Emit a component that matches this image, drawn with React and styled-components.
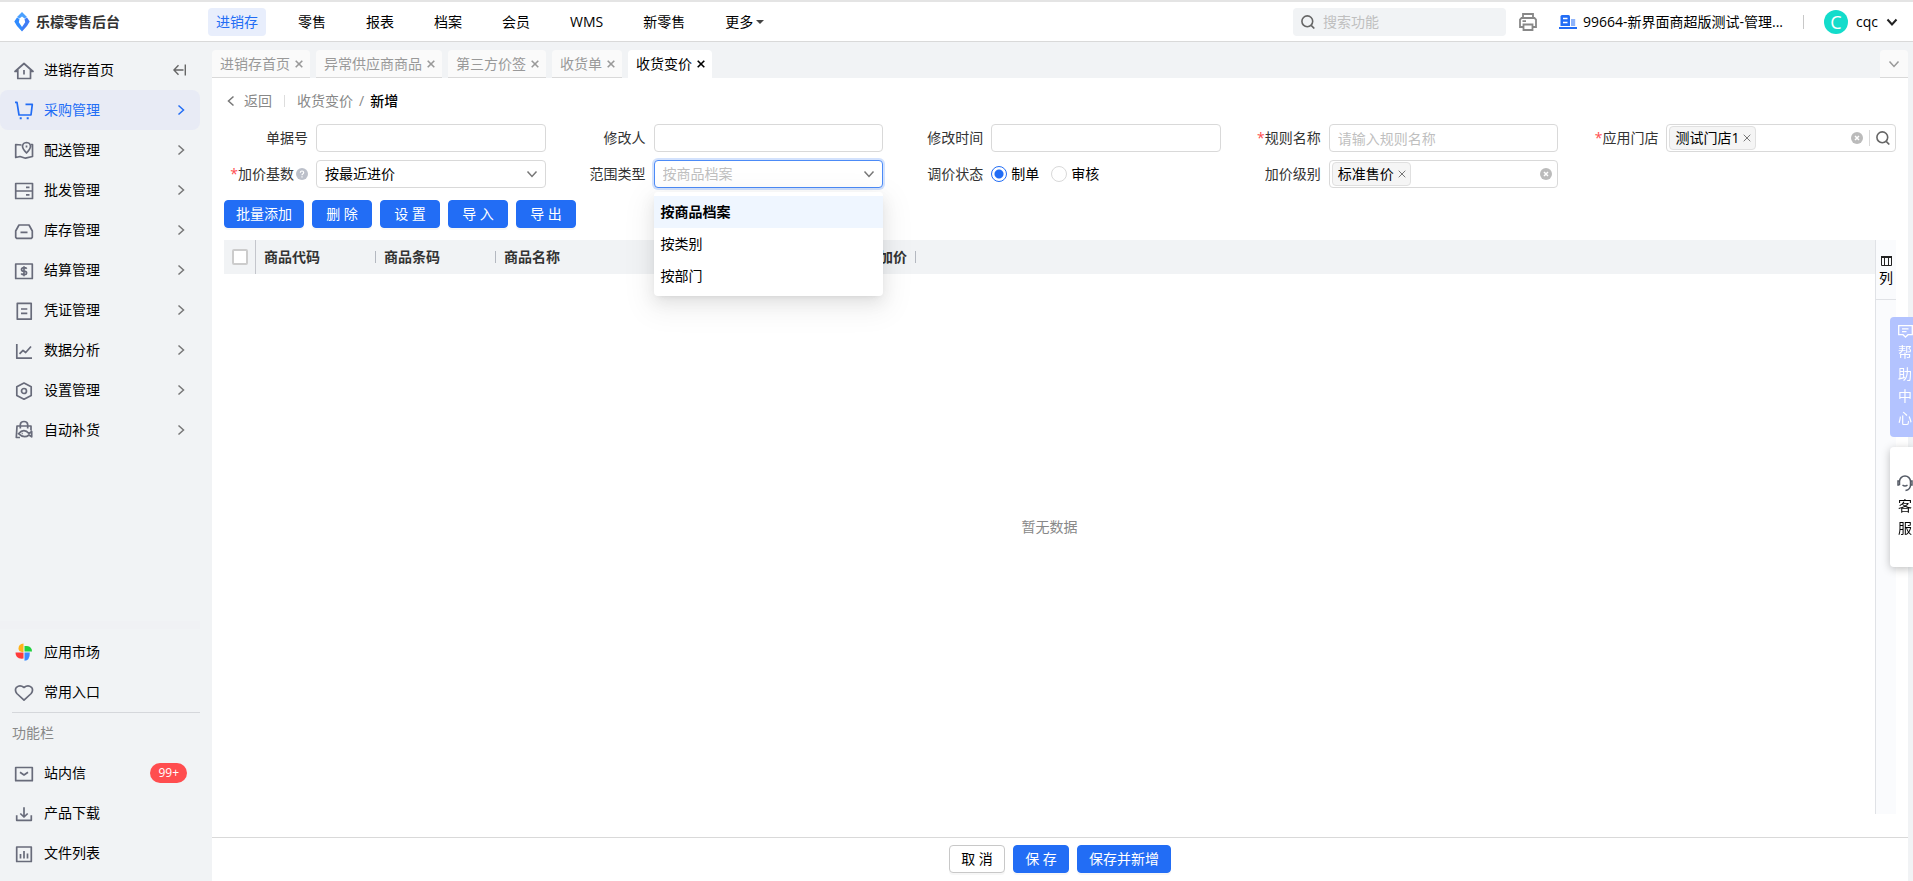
import styled, { createGlobalStyle, css } from "styled-components"
import { useState } from "react"

const menuSuperior = ["进销存", "零售", "报表", "档案", "会员", "WMS", "新零售"]

const abas = ["进销存首页", "异常供应商商品", "第三方价签", "收货单", "收货变价"]

const menuLateral = [
    { nome: "采购管理", icone: "cart" },
    { nome: "配送管理", icone: "map" },
    { nome: "批发管理", icone: "server" },
    { nome: "库存管理", icone: "stock" },
    { nome: "结算管理", icone: "money" },
    { nome: "凭证管理", icone: "voucher" },
    { nome: "数据分析", icone: "chart" },
    { nome: "设置管理", icone: "settings" },
    { nome: "自动补货", icone: "bag" },
]

const opcoes = ["按商品档案", "按类别", "按部门"]

export default function App() {

    const [categoria, setCategoria] = useState("采购管理")
    const [tipo, setTipo] = useState("按商品档案")
    const [estado, setEstado] = useState("制单")

    return (
        <FullPage>
            <GlobalStyle />
            <Header>
                <Logo>
                    <LogoIcon />
                    <h1>乐檬零售后台</h1>
                </Logo>
                <MenuTopo>
                    {menuSuperior.map((m, i) => <LinkTopo href="#" key={m} $ativo={i === 0}>{m}</LinkTopo>)}
                    <LinkTopo href="#">更多<Caret /></LinkTopo>
                </MenuTopo>
                <Busca>
                    <SearchIcon />
                    <input aria-label="搜索功能" placeholder="搜索功能" />
                </Busca>
                <BotaoIcone aria-label="打印"><PrinterIcon /></BotaoIcone>
                <Loja href="#"><BuildingIcon />99664-新界面商超版测试-管理...</Loja>
                <Risco />
                <Usuario>
                    <Avatar>C</Avatar>
                    cqc
                    <Seta cor="#222222" grossura={2} />
                </Usuario>
            </Header>

            <Corpo>
                <Lateral>
                    <ItemLateral>
                        <MenuIcon nome="home" />
                        <span>进销存首页</span>
                        <CollapseIcon />
                    </ItemLateral>
                    {menuLateral.map(({ nome, icone }) => (
                        <ItemLateral key={nome} $ativo={nome === categoria} onClick={() => setCategoria(nome)}>
                            <MenuIcon nome={icone} />
                            <span>{nome}</span>
                            <Seta lado="direita" cor={nome === categoria ? "#226df5" : "#777777"} />
                        </ItemLateral>
                    ))}
                    <Espaco />
                    <Sombra />
                    <ItemLateral>
                        <MarketIcon />
                        <span>应用市场</span>
                    </ItemLateral>
                    <ItemLateral>
                        <MenuIcon nome="heart" />
                        <span>常用入口</span>
                    </ItemLateral>
                    <Divisao />
                    <Titulo>功能栏</Titulo>
                    <ItemLateral>
                        <MenuIcon nome="mail" />
                        <span>站内信</span>
                        <Aviso>99+</Aviso>
                    </ItemLateral>
                    <ItemLateral>
                        <MenuIcon nome="download" />
                        <span>产品下载</span>
                    </ItemLateral>
                    <ItemLateral>
                        <MenuIcon nome="files" />
                        <span>文件列表</span>
                    </ItemLateral>
                </Lateral>

                <Principal>
                    <Abas>
                        {abas.map((a) => (
                            <Aba key={a} $ativa={a === "收货变价"}>
                                {a}
                                <CloseIcon />
                            </Aba>
                        ))}
                        <MaisAbas aria-label="更多标签"><Seta cor="#999999" /></MaisAbas>
                    </Abas>
                    <Conteudo>
                        <Caminho>
                            <a href="#"><Seta lado="esquerda" cor="#777777" />返回</a>
                            <i />
                            <a href="#">收货变价</a>
                            <span>/</span>
                            <strong>新增</strong>
                        </Caminho>

                        <Formulario>
                            <Campo>
                                <label htmlFor="numero">单据号</label>
                                <Entrada id="numero" />
                            </Campo>
                            <Campo>
                                <label htmlFor="autor">修改人</label>
                                <Entrada id="autor" />
                            </Campo>
                            <Campo>
                                <label htmlFor="hora">修改时间</label>
                                <Entrada id="hora" />
                            </Campo>
                            <Campo>
                                <label htmlFor="regra"><b>*</b>规则名称</label>
                                <Entrada id="regra" placeholder="请输入规则名称" />
                            </Campo>
                            <Campo>
                                <label htmlFor="lojas"><b>*</b>应用门店</label>
                                <Caixa>
                                    <Etiqueta>测试门店1<button aria-label="移除"><CloseIcon fina /></button></Etiqueta>
                                    <input id="lojas" />
                                    <ClearIcon />
                                    <i />
                                    <button aria-label="搜索"><SearchIcon /></button>
                                </Caixa>
                            </Campo>
                            <Campo>
                                <label htmlFor="base"><b>*</b>加价基数<HelpIcon /></label>
                                <Selecao>
                                    <select id="base"><option>按最近进价</option></select>
                                    <Seta cor="#777777" />
                                </Selecao>
                            </Campo>
                            <Campo>
                                <label htmlFor="tipo">范围类型</label>
                                <Selecao $aberto>
                                    <select id="tipo" value={tipo} onChange={(e) => setTipo(e.target.value)}>
                                        {opcoes.map((o) => <option key={o}>{o}</option>)}
                                    </select>
                                    <Seta cor="#777777" />
                                    <Lista role="listbox" aria-label="范围类型">
                                        {opcoes.map((o) => (
                                            <Opcao key={o} role="option" aria-selected={o === tipo} $ativa={o === tipo} onClick={() => setTipo(o)}>{o}</Opcao>
                                        ))}
                                    </Lista>
                                </Selecao>
                            </Campo>
                            <Campo as="fieldset">
                                <legend>调价状态</legend>
                                <Radios>
                                    {["制单", "审核"].map((r) => (
                                        <label key={r}>
                                            <input type="radio" name="estado" checked={estado === r} onChange={() => setEstado(r)} />
                                            {r}
                                        </label>
                                    ))}
                                </Radios>
                            </Campo>
                            <Campo>
                                <label htmlFor="nivel">加价级别</label>
                                <Caixa>
                                    <Etiqueta>标准售价<button aria-label="移除"><CloseIcon fina /></button></Etiqueta>
                                    <input id="nivel" />
                                    <ClearIcon />
                                </Caixa>
                            </Campo>
                        </Formulario>

                        <Acoes>
                            <Botao $largo>批量添加</Botao>
                            <Botao $largo>删 除</Botao>
                            <Botao $largo>设 置</Botao>
                            <Botao $largo>导 入</Botao>
                            <Botao $largo>导 出</Botao>
                        </Acoes>

                        <Quadro>
                            <Dados>
                                <Tabela>
                                    <thead>
                                        <tr>
                                            <Selecionar><input type="checkbox" aria-label="全选" /></Selecionar>
                                            <Coluna $largura="120px"><div>商品代码</div></Coluna>
                                            <Coluna $largura="120px"><div>商品条码</div></Coluna>
                                            <Coluna $largura="240px"><div>商品名称</div></Coluna>
                                            <Coluna $largura="180px" $fim><div>加价</div></Coluna>
                                            <th />
                                        </tr>
                                    </thead>
                                </Tabela>
                                <Vazio>暂无数据</Vazio>
                            </Dados>
                            <Ferramentas>
                                <button><ColumnsIcon />列</button>
                            </Ferramentas>
                        </Quadro>

                        <Rodape>
                            <Botao $claro>取 消</Botao>
                            <Botao>保 存</Botao>
                            <Botao>保存并新增</Botao>
                        </Rodape>
                    </Conteudo>
                </Principal>
            </Corpo>

            <Flutuantes>
                <Flutuante $azul>
                    <ChatIcon />
                    帮助中心
                </Flutuante>
                <Flutuante>
                    <HeadsetIcon />
                    客服
                </Flutuante>
            </Flutuantes>
        </FullPage>
    )
}

const caminhosSeta = {
    baixo: "M1.5 3.5 6 8.5l4.500-5",
    direita: "M3.500 1.500 8.500 6l-5 4.500",
    esquerda: "M8.500 1.500 3.500 6l5 4.500",
}

function Seta({ lado = "baixo", cor, grossura = 1.5 }) {
    return (
        <svg width="12" height="12" viewBox="0 0 12 12" fill="none" stroke={cor} strokeWidth={grossura}>
            <path d={caminhosSeta[lado]} />
        </svg>
    )
}

function LogoIcon() {
    return (
        <svg width="16" height="20" viewBox="0 0 16 20">
            <path d="M8 0 13 5 10.5 6.5 8 4.5 5.5 6.5 3 5z" fill="#4aa0ff" />
            <path d="M3 5.5 0.3 9.5 3 14 8 19.5V15L4.8 10.2 5.5 7z" fill="#2f8bff" />
            <path d="M13 5.5 15.7 9.5 13 14 8 19.5V15L11.2 10.2 10.5 7z" fill="#3f7cf5" />
        </svg>
    )
}

function SearchIcon() {
    return (
        <svg width="14" height="14" viewBox="0 0 14 14" fill="none" stroke="#666666" strokeWidth="1.6">
            <circle cx="6.3" cy="6.3" r="5.4" />
            <path d="M10.2 10.4 13.3 13.5" />
        </svg>
    )
}

function PrinterIcon() {
    return (
        <svg width="18" height="18" viewBox="0 0 18 18" fill="none" stroke="#888888" strokeWidth="1.8">
            <path d="M4 5V1h10v4M4.5 14H1V6.5L2.5 5h13L17 6.5V14h-3.5" />
            <path d="M4.5 11.500h9V17h-9zM3.500 8.200h3.500" />
        </svg>
    )
}

function BuildingIcon() {
    return (
        <svg width="18" height="14" viewBox="0 0 18 14">
            <path d="M1.5 1.5Q1.5 0 3 0h6.5Q11 0 11 1.5V11H1.5z" fill="#226df5" />
            <path d="M12 4h4.2v7H12z" fill="#8fb4fa" />
            <path d="M0 12h18v2H0z" fill="#226df5" />
            <path d="M4 3.5h4.5M4 7.5h4.5" stroke="#ffffff" strokeWidth="1.3" />
        </svg>
    )
}

function CloseIcon({ fina }) {
    return (
        <svg width="8" height="8" viewBox="0 0 8 8" fill="none" stroke="currentColor" strokeWidth={fina ? 1 : 1.6}>
            <path d="M0.7 0.7 7.3 7.3M7.3 0.7 0.7 7.3" />
        </svg>
    )
}

function ClearIcon() {
    return (
        <svg width="12" height="12" viewBox="0 0 12 12">
            <circle cx="6" cy="6" r="6" fill="#bbbbbb" />
            <path d="M4 4 8 8M8 4 4 8" stroke="#ffffff" strokeWidth="1.5" />
        </svg>
    )
}

function HelpIcon() {
    return (
        <svg width="12" height="12" viewBox="0 0 12 12">
            <circle cx="6" cy="6" r="6" fill="#bcc0ca" />
            <path d="M4.3 4.7Q4.4 3 6 3T7.7 4.6Q7.7 5.4 6.8 5.9 6 6.400 6 7.2M6 8.200V9.4" stroke="#ffffff" strokeWidth="1.2" fill="none" />
        </svg>
    )
}

function CollapseIcon() {
    return (
        <svg width="14" height="12" viewBox="0 0 14 12" fill="none" stroke="#666666" strokeWidth="1.4">
            <path d="M12.3 0.5v11M10.500 6H1M5.500 1.200 0.900 6 5.500 10.800" />
        </svg>
    )
}

function ColumnsIcon() {
    return (
        <svg width="11" height="10" viewBox="0 0 11 10" fill="none" stroke="#222222">
            <path d="M0.500 1.500h10v8H0.500zM3.500 1v8M7.500 1v8" />
            <path d="M0 1h11" strokeWidth="2" />
        </svg>
    )
}

function ChatIcon() {
    return (
        <svg width="15" height="13" viewBox="0 0 15 13" fill="none" stroke="#ffffff" strokeWidth="1.3">
            <path d="M0.700 0.700h13.600v9H10L7.500 12 5 9.700H0.700zM4 3.800h6.500M4 6.600h4.500" />
        </svg>
    )
}

function HeadsetIcon() {
    return (
        <svg width="16" height="17" viewBox="0 0 16 17" fill="none" stroke="#555b66" strokeWidth="1.5">
            <path d="M2.500 10V6.500a5.500 5.500 0 0 1 11 0V10q0 4.500-5 5.500" />
            <path d="M2.500 6H1v4h1.500M13.500 6H15v4h-1.500M5.500 10q2.500 2 5 0" />
        </svg>
    )
}

function MarketIcon() {
    return (
        <svg width="20" height="20" viewBox="0 0 20 20">
            <path d="M9.500 1.500v8.500H8Q4.500 9.500 4.500 6.500 4.500 2 9.500 1.500z" fill="#ffb31a" />
            <path d="M10.500 4H13q5 0.500 5 5.500h-7.500z" fill="#21d13f" />
            <path d="M10.500 10.500h5.300q0.200 8-5.300 8.300z" fill="#3d8bff" />
            <path d="M1.500 10.500h8v6q-8 1-8-6z" fill="#ff3b3b" />
        </svg>
    )
}

// desenhos do menu lateral, todos em 20x20
const desenhos = {
    home: <path d="M3.500 11.500H1L10 3.500l9 8h-2.500M3.800 9.500V18.500h12.700V9.500M10 10v4.500" />,
    cart: <><path d="M1 2.300h2L5 15h12L18.300 4.300H11.500" /><path d="M5.700 18.300h2M12.700 18.300h2" strokeWidth="2" /></>,
    map: <path d="M7.500 5 1.700 4.500V17.500L6 16.500l5.500 1.700 7-1.700V4.500H17M12.500 13Q8.500 9 8.500 6.300 8.800 2.700 12.500 2.500 16.300 2.700 16.500 6.300 16.500 9 12.500 13zM12.500 5.500v2" />,
    server: <path d="M1.700 3.500h16.800v15H1.700zM1.700 11h16.800M12 7.300h3.500M12 14.900h3.500" />,
    stock: <path d="M5 5h10L18.300 11v6.300l-1 1H2.700l-1-1V11zM6.500 12.300h7" />,
    money: <path d="M1.700 4h16.600v14.500H1.700zM12.700 8.700Q12 7.700 10 7.700q-2.500 0-2.500 1.700T10 11.200t2.600 1.800Q12.500 14.700 10 14.700q-2 0-2.800-1.200M10 6.300v9.900" />,
    voucher: <path d="M3.300 3.300h13.900v15.900H3.300zM7 9h6.300M7 13.300h6.300" />,
    chart: <path d="M2.800 4v14.200H18M5.500 13.800 9 10.300l2.700 2.200 5.300-6" />,
    settings: <><path d="M10 3 17.200 6.700v8.700L10 19.200 2.800 15.400V6.700z" /><circle cx="10" cy="11" r="2.5" /></>,
    bag: <path d="M6.300 8.500V4.500q0.300-3 3.700-3t3.700 3v4M17 10.500V6H3L2.300 17.500H6M4.500 13.700q5.500-6 10.500-0.200l2.700-2v5.300l-2.700-1.800q-5 4-10.500-1.300zM7.700 13.500h1" />,
    heart: <path d="M10 18.200 2.800 11.500Q0.300 8 2.500 5.300 6 2.500 10 5.500q4-3 7.500-0.200Q19.700 8 17.200 11.500z" />,
    mail: <path d="M1.700 4.500h16.600v13.200H1.700zM6 9.300l4 2.700 4-2.700" />,
    download: <path d="M10 4.300V14M6.300 10.500 10 14l3.700-3.500M2.700 12.300v5h14.600v-5" />,
    files: <path d="M2.700 4h14.600v14.500H2.700zM6.500 11v4.500M10 8v7.500M13.500 10.500v5" />,
}

function MenuIcon({ nome }) {
    return (
        <svg width="20" height="20" viewBox="0 0 20 20" fill="none" stroke={nome === "cart" ? "currentColor" : "#686b7a"} strokeWidth="1.7" strokeLinejoin="round">
            {desenhos[nome]}
        </svg>
    )
}

const GlobalStyle = createGlobalStyle`
    * {
        box-sizing: border-box;
    }

    body {
        margin: 0;
        overflow: hidden;
    }

    body, button, input, select {
        font-family: "Open Sans", "Noto Sans CJK SC", sans-serif;
        font-size: 14px;
        line-height: 20px;
        color: #000000;
    }

    button {
        border: none;
        background: none;
        padding: 0;
        cursor: pointer;
    }

    a {
        color: inherit;
        text-decoration: none;
    }

    svg {
        flex-shrink: 0;
    }

    input::placeholder {
        color: #bfbfbf;
    }
`

const FullPage = styled.div`
    display: flex;
    flex-direction: column;
    height: 100vh;
    background-color: #f1f3f5;
`

const Header = styled.header`
    display: flex;
    align-items: center;
    height: 42px;
    flex-shrink: 0;
    padding: 2px 15px 0 14px;
    background-color: #ffffff;
    border-bottom: 1px solid #d9d9d9;
    box-shadow: inset 0 2px 0 #e4e4e4;
`

const Logo = styled.div`
    display: flex;
    align-items: center;
    gap: 6px;
    width: 194px;

    h1 {
        margin: 0;
        font-size: 14px;
        font-weight: 700;
        color: #333333;
    }
`

const MenuTopo = styled.nav`
    display: flex;
    gap: 24px;
    flex: 1;
`

const LinkTopo = styled.a`
    display: flex;
    align-items: center;
    height: 28px;
    padding: 0 8px;
    border-radius: 4px;
    color: ${(p) => p.$ativo ? "#226df5" : "#000000"};
    background-color: ${(p) => p.$ativo ? "#e8eefc" : "transparent"};
`

const Caret = styled.span`
    margin-left: 3px;
    border: 4px solid transparent;
    border-top-color: #444444;
    border-bottom: none;
`

const Busca = styled.div`
    display: flex;
    align-items: center;
    gap: 8px;
    width: 213px;
    height: 28px;
    padding: 0 8px;
    border-radius: 4px;
    background-color: #f1f3f5;

    input {
        flex: 1;
        min-width: 0;
        padding: 0;
        border: none;
        outline: none;
        background: none;
    }
`

const BotaoIcone = styled.button`
    display: flex;
    margin: 0 22px 0 13px;
`

const Loja = styled.a`
    display: flex;
    align-items: center;
    gap: 6px;
    white-space: nowrap;
`

const Risco = styled.span`
    width: 1px;
    height: 14px;
    margin: 0 20px;
    background-color: #c8c8c8;
`

const Usuario = styled.button`
    display: flex;
    align-items: center;
    gap: 8px;
    font-weight: 500;
`

const Avatar = styled.span`
    width: 24px;
    height: 24px;
    border-radius: 50%;
    background-color: #13dccb;
    color: #ffffff;
    font-size: 18px;
    font-weight: 400;
    line-height: 24px;
    text-align: center;
`

const Corpo = styled.div`
    display: flex;
    flex: 1;
    min-height: 0;
`

const Lateral = styled.aside`
    display: flex;
    flex-direction: column;
    width: 212px;
    flex-shrink: 0;
    padding: 8px 12px 8px 0;
`

const ItemLateral = styled.button`
    display: flex;
    align-items: center;
    gap: 10px;
    height: 40px;
    flex-shrink: 0;
    padding: 0 13px 0 14px;
    border-radius: 8px;
    text-align: left;
    color: ${(p) => p.$ativo ? "#226df5" : "#000000"};
    background-color: ${(p) => p.$ativo ? "#e8ebf5" : "transparent"};

    > span:nth-child(2) {
        flex: 1;
    }
`

const Espaco = styled.div`
    flex: 1;
`

const Sombra = styled.div`
    height: 8px;
    margin-bottom: 3px;
    background-color: #f0f1f4;
`

const Divisao = styled.div`
    height: 1px;
    margin-left: 12px;
    background-color: #d5d7db;
`

const Titulo = styled.div`
    padding-left: 12px;
    line-height: 40px;
    color: #888888;
`

const Aviso = styled.span`
    height: 20px;
    padding: 0 8px;
    border-radius: 10px;
    background-color: #ff4d4f;
    color: #ffffff;
    font-size: 12px;
`

const Principal = styled.main`
    display: flex;
    flex-direction: column;
    flex: 1;
    min-width: 0;
    padding: 8px 5px 0 0;
`

const Abas = styled.div`
    display: flex;
    gap: 6px;
    height: 28px;
    flex-shrink: 0;
`

const Aba = styled.button`
    display: flex;
    align-items: center;
    gap: 5px;
    padding: 0 7px 0 8px;
    border-radius: 4px 4px 0 0;
    background-color: ${(p) => p.$ativa ? "#ffffff" : "#fafafa"};
    border-bottom: 1px solid ${(p) => p.$ativa ? "#ffffff" : "#d9d9d9"};
    color: ${(p) => p.$ativa ? "#000000" : "#999999"};
`

const MaisAbas = styled.button`
    display: flex;
    align-items: center;
    justify-content: center;
    width: 28px;
    margin-left: auto;
    border-radius: 4px 4px 0 0;
    background-color: #fafafa;
    border-bottom: 1px solid #d9d9d9;
`

const Conteudo = styled.div`
    display: flex;
    flex-direction: column;
    flex: 1;
    min-height: 0;
    background-color: #ffffff;
`

const Caminho = styled.div`
    display: flex;
    align-items: center;
    height: 46px;
    padding-left: 13px;
    color: #888888;

    a {
        display: flex;
        align-items: center;
        gap: 7px;
    }

    i {
        width: 1px;
        height: 12px;
        margin: 0 12px;
        background-color: #dddddd;
    }

    strong {
        font-weight: 500;
        color: #000000;
    }

    > span {
        margin: 0 6px;
    }
`

const Formulario = styled.form`
    display: grid;
    grid-template-columns: repeat(5, 1fr);
    gap: 8px 16px;
    padding: 0 12px;
`

const Campo = styled.div`
    display: flex;
    align-items: center;
    height: 28px;
    min-width: 0;
    margin: 0;
    padding: 0;
    border: none;

    > label, > legend {
        display: flex;
        align-items: center;
        justify-content: flex-end;
        width: 92px;
        padding-right: 8px;
        flex-shrink: 0;
        float: left;
        color: #333333;
        white-space: nowrap;
    }

    > label svg {
        margin-left: 2px;
    }

    b {
        color: #ff4d4f;
        font-weight: 400;
    }
`

const borda = css`
    border: 1px solid #d9d9d9;
    border-radius: 4px;
    background-color: #ffffff;
`

const Entrada = styled.input`
    ${borda}
    flex: 1;
    min-width: 0;
    height: 28px;
    padding: 0 8px;
`

const Caixa = styled.div`
    ${borda}
    display: flex;
    align-items: center;
    flex: 1;
    min-width: 0;
    height: 28px;
    padding: 0 5px 0 2px;

    input {
        flex: 1;
        min-width: 0;
        border: none;
        outline: none;
        background: none;
    }

    button {
        display: flex;
    }

    i {
        width: 1px;
        height: 16px;
        margin: 0 6px;
        background-color: #d9d9d9;
    }
`

const Etiqueta = styled.span`
    display: flex;
    align-items: center;
    gap: 4px;
    height: 24px;
    padding: 0 4px 0 5px;
    border: 1px solid #e0e0e0;
    border-radius: 4px;
    background-color: #f5f5f5;
    white-space: nowrap;

    button {
        color: #777777;
    }
`

const Selecao = styled.div`
    position: relative;
    display: flex;
    align-items: center;
    flex: 1;
    min-width: 0;

    select {
        ${borda}
        appearance: none;
        width: 100%;
        height: 28px;
        padding: 0 28px 0 8px;
        outline: none;
        ${(p) => p.$aberto && css`
            border-color: #4c8bf7;
            box-shadow: 0 0 0 2px #d3e2fd;
            color: #bfbfbf;
        `}
    }

    > svg {
        position: absolute;
        right: 8px;
        pointer-events: none;
    }
`

const Lista = styled.div`
    position: absolute;
    top: 32px;
    left: 0;
    right: 0;
    z-index: 2;
    padding: 4px 0;
    border-radius: 4px;
    background-color: #ffffff;
    box-shadow: 0 3px 6px -4px rgba(0, 0, 0, 0.12), 0 6px 16px rgba(0, 0, 0, 0.08), 0 9px 28px 8px rgba(0, 0, 0, 0.05);
`

const Opcao = styled.div`
    padding: 0 7px;
    line-height: 32px;
    font-weight: ${(p) => p.$ativa ? 700 : 400};
    background-color: ${(p) => p.$ativa ? "#eff6ff" : "transparent"};
    cursor: pointer;
`

const Radios = styled.div`
    display: flex;
    gap: 12px;

    label {
        display: flex;
        align-items: center;
        gap: 4px;
    }

    input {
        appearance: none;
        width: 16px;
        height: 16px;
        margin: 0;
        border: 1px solid #d9d9d9;
        border-radius: 50%;
    }

    input:checked {
        border-color: #226df5;
        background: radial-gradient(circle, #226df5 4px, #ffffff 5px);
    }
`

const Acoes = styled.div`
    display: flex;
    gap: 8px;
    padding: 12px;
`

const Botao = styled.button`
    height: 28px;
    min-width: ${(p) => p.$largo ? "60px" : "56px"};
    padding: 0 11px;
    border: 1px solid ${(p) => p.$claro ? "#c8c8c8" : "#226df5"};
    border-radius: 4px;
    background-color: ${(p) => p.$claro ? "#ffffff" : "#226df5"};
    color: ${(p) => p.$claro ? "#000000" : "#ffffff"};
    box-shadow: 0 2px 0 rgba(0, 0, 0, 0.03);
`

const Quadro = styled.div`
    display: flex;
    flex: 1;
    min-height: 0;
    margin: 0 12px 23px;
`

const Dados = styled.div`
    display: flex;
    flex-direction: column;
    flex: 1;
    min-width: 0;
`

const Tabela = styled.table`
    width: 100%;
    table-layout: fixed;
    border-collapse: separate;
    border-spacing: 0;
    background-color: #f1f3f5;
    color: #333333;
`

const Selecionar = styled.th`
    width: 32px;
    height: 34px;
    padding: 0 7px 0 8px;
    border-right: 1px solid #c4c6cc;

    input {
        display: block;
        appearance: none;
        width: 16px;
        height: 16px;
        margin: 0;
        border: 2px solid #cccccc;
        border-radius: 2px;
        background-color: #ffffff;
    }
`

const Coluna = styled.th`
    width: ${(p) => p.$largura};
    padding: 0;
    text-align: ${(p) => p.$fim ? "right" : "left"};

    div {
        padding: 0 8px;
        border-right: 1px solid #b4b8c0;
        line-height: 12px;
    }
`

const Vazio = styled.div`
    display: flex;
    align-items: center;
    justify-content: center;
    flex: 1;
    padding-bottom: 34px;
    color: #888888;
`

const Ferramentas = styled.div`
    width: 21px;
    border-left: 1px solid #e0e2e6;
    background-color: #fafbfd;

    button {
        display: flex;
        flex-direction: column;
        align-items: center;
        gap: 2px;
        width: 100%;
        padding: 16px 0 11px;
        border-bottom: 1px solid #e0e2e6;
    }
`

const Rodape = styled.footer`
    display: flex;
    justify-content: center;
    gap: 8px;
    padding: 7px 0 8px;
    border-top: 1px solid #d9d9d9;
`

const Flutuantes = styled.div`
    position: fixed;
    top: 317px;
    right: 0;
    z-index: 3;
    display: flex;
    flex-direction: column;
    gap: 10px;
`

const Flutuante = styled.button`
    display: flex;
    flex-direction: column;
    align-items: center;
    justify-content: center;
    width: 23px;
    height: 120px;
    padding: 0 1px 0 8px;
    border-radius: 4px 0 0 4px;
    line-height: 22px;
    word-break: break-all;
    color: ${(p) => p.$azul ? "#ffffff" : "#000000"};
    background-color: ${(p) => p.$azul ? "#b3c3ff" : "#ffffff"};
    box-shadow: ${(p) => p.$azul ? "none" : "0 2px 8px rgba(0, 0, 0, 0.25)"};

    svg {
        margin-bottom: 3px;
    }
`
